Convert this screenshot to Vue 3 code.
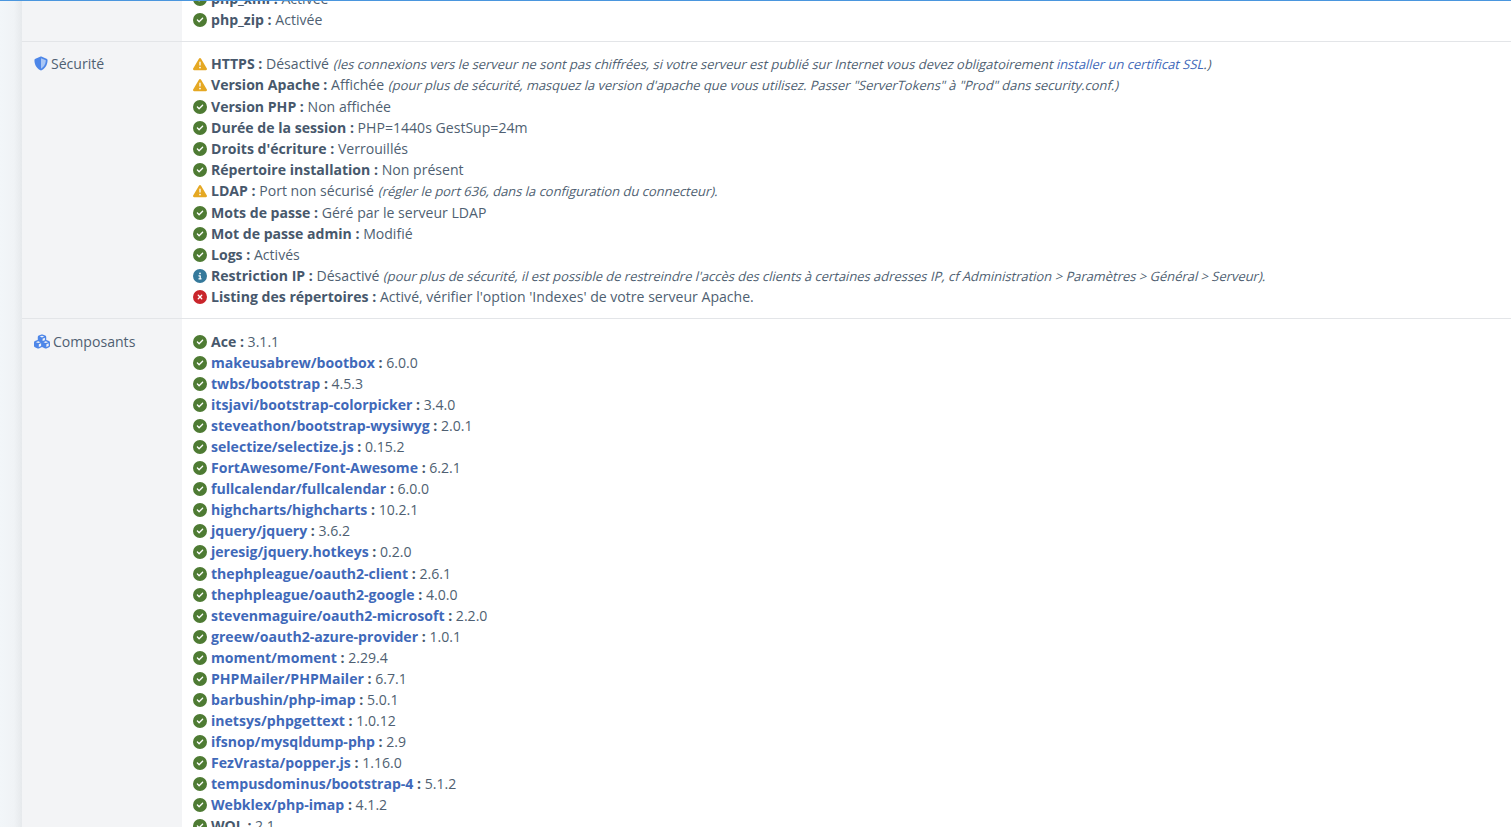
<script setup>
const icons = {
  ok: { vb: '0 0 512 512', c: '#4e7b33', d: 'M256 512A256 256 0 1 0 256 0a256 256 0 1 0 0 512zM369 209L241 337c-9.4 9.4-24.6 9.4-33.9 0l-64-64c-9.4-9.4-9.4-24.6 0-33.9s24.6-9.4 33.9 0l47 47L335 175c9.4-9.4 24.6-9.4 33.9 0s9.4 24.6 0 33.9z' },
  warn: { vb: '0 0 512 512', c: '#e5a823', d: 'M256 32c14.2 0 27.3 7.5 34.5 19.8l216 368c7.3 12.4 7.3 27.7 .2 40.1S486.3 480 472 480H40c-14.3 0-27.6-7.7-34.7-20.1s-7-27.8 .2-40.1l216-368C228.7 39.5 241.8 32 256 32zm0 128c-13.3 0-24 10.7-24 24V296c0 13.3 10.7 24 24 24s24-10.7 24-24V184c0-13.3-10.7-24-24-24zm32 224a32 32 0 1 0 -64 0 32 32 0 1 0 64 0z' },
  info: { vb: '0 0 512 512', c: '#35799b', d: 'M256 512A256 256 0 1 0 256 0a256 256 0 1 0 0 512zM216 336h24V272H216c-13.3 0-24-10.7-24-24s10.7-24 24-24h48c13.3 0 24 10.7 24 24v88h8c13.3 0 24 10.7 24 24s-10.7 24-24 24H216c-13.3 0-24-10.7-24-24s10.7-24 24-24zm40-208a32 32 0 1 1 0 64 32 32 0 1 1 0-64z' },
  err: { vb: '0 0 512 512', c: '#c9252b', d: 'M256 512A256 256 0 1 0 256 0a256 256 0 1 0 0 512zM175 175c9.4-9.4 24.6-9.4 33.9 0l47 47 47-47c9.4-9.4 24.6-9.4 33.9 0s9.4 24.6 0 33.9l-47 47 47 47c9.4 9.4 9.4 24.6 0 33.9s-24.6 9.4-33.9 0l-47-47-47 47c-9.4 9.4-24.6 9.4-33.9 0s-9.4-24.6 0-33.9l47-47-47-47c-9.4-9.4-9.4-24.6 0-33.9z' }
}

const top = [
  { i: 'ok', l: 'php_xml :', v: 'Activée' },
  { i: 'ok', l: 'php_zip :', v: 'Activée' }
]
const security = [
  { i: 'warn', l: 'HTTPS :', v: 'Désactivé', n: '(les connexions vers le serveur ne sont pas chiffrées, si votre serveur est publié sur Internet vous devez obligatoirement ', a: 'installer un certificat SSL', e: '.)' },
  { i: 'warn', l: 'Version Apache :', v: 'Affichée', n: '(pour plus de sécurité, masquez la version d\'apache que vous utilisez. Passer "ServerTokens" à "Prod" dans security.conf.)' },
  { i: 'ok', l: 'Version PHP :', v: 'Non affichée' },
  { i: 'ok', l: 'Durée de la session :', v: 'PHP=1440s GestSup=24m' },
  { i: 'ok', l: 'Droits d\'écriture :', v: 'Verrouillés' },
  { i: 'ok', l: 'Répertoire installation :', v: 'Non présent' },
  { i: 'warn', l: 'LDAP :', v: 'Port non sécurisé', n: '(régler le port 636, dans la configuration du connecteur).' },
  { i: 'ok', l: 'Mots de passe :', v: 'Géré par le serveur LDAP' },
  { i: 'ok', l: 'Mot de passe admin :', v: 'Modifié' },
  { i: 'ok', l: 'Logs :', v: 'Activés' },
  { i: 'info', l: 'Restriction IP :', v: 'Désactivé', n: '(pour plus de sécurité, il est possible de restreindre l\'accès des clients à certaines adresses IP, cf Administration > Paramètres > Général > Serveur).' },
  { i: 'err', l: 'Listing des répertoires :', v: 'Activé, vérifier l\'option \'Indexes\' de votre serveur Apache.' }
]
const comps = [
  ['Ace', '3.1.1', true], ['makeusabrew/bootbox', '6.0.0'], ['twbs/bootstrap', '4.5.3'],
  ['itsjavi/bootstrap-colorpicker', '3.4.0'], ['steveathon/bootstrap-wysiwyg', '2.0.1'],
  ['selectize/selectize.js', '0.15.2'], ['FortAwesome/Font-Awesome', '6.2.1'],
  ['fullcalendar/fullcalendar', '6.0.0'], ['highcharts/highcharts', '10.2.1'],
  ['jquery/jquery', '3.6.2'], ['jeresig/jquery.hotkeys', '0.2.0'],
  ['thephpleague/oauth2-client', '2.6.1'], ['thephpleague/oauth2-google', '4.0.0'],
  ['stevenmaguire/oauth2-microsoft', '2.2.0'], ['greew/oauth2-azure-provider', '1.0.1'],
  ['moment/moment', '2.29.4'], ['PHPMailer/PHPMailer', '6.7.1'], ['barbushin/php-imap', '5.0.1'],
  ['inetsys/phpgettext', '1.0.12'], ['ifsnop/mysqldump-php', '2.9'], ['FezVrasta/popper.js', '1.16.0'],
  ['tempusdominus/bootstrap-4', '5.1.2'], ['Webklex/php-imap', '4.1.2'], ['WOL', '2.1', true]
].map(([l, v, plain]) => ({ i: 'ok', l, v, plain }))
</script>

<template>
  <div class="page">
    <aside class="rail"></aside>
    <main class="content">
      <section class="row row-first">
        <div class="side"></div>
        <div class="body">
          <div v-for="r in top" :key="r.l" class="line">
            <svg class="ic" :viewBox="icons[r.i].vb" :fill="icons[r.i].c"><path :d="icons[r.i].d" /></svg>
            <b>{{ r.l }}</b> {{ r.v }}
          </div>
        </div>
      </section>

      <section class="row">
        <div class="side">
          <svg class="side-ic shield" viewBox="0 0 512 512">
            <path fill="#a9c6f5" d="M256 40 60 120v40c8 120 80 270 196 320z" transform="matrix(-1 0 0 1 512 0)" />
            <path fill="#4d86e8" d="M256 0c4.6 0 9.2 1 13.4 2.9L457.7 82.8c22 9.3 38.4 31 38.3 57.2c-.5 99.2-41.3 280.7-213.6 363.2c-16.7 8-36.1 8-52.8 0C57.3 420.7 16.5 239.2 16 140c-.1-26.2 16.3-47.9 38.3-57.2L242.7 2.9C246.8 1 251.4 0 256 0zm0 66.8V444.8C394 378 431.1 230.1 432 141.4L256 66.8l0 0z" />
          </svg>
          <span>Sécurité</span>
        </div>
        <div class="body">
          <div v-for="r in security" :key="r.l" class="line" :class="{ noted: r.n }">
            <svg class="ic" :viewBox="icons[r.i].vb" :fill="icons[r.i].c"><path :d="icons[r.i].d" /></svg>
            <b>{{ r.l }}</b> {{ r.v }}
            <span v-if="r.n" class="note">{{ r.n }}<a v-if="r.a" class="link">{{ r.a }}</a>{{ r.e }}</span>
          </div>
        </div>
      </section>

      <section class="row row-comps">
        <div class="side">
          <svg class="side-ic cubes" viewBox="0 0 576 512" fill="#4d86e8">
            <path d="M290.8 48.6l78.4 29.7L288 109.5 206.8 78.3l78.4-29.7c1.8-.7 3.8-.7 5.7 0zM136 92.5V204.7c-1.3 .4-2.6 .8-3.9 1.3l-96 36.4C14.4 250.6 0 271.5 0 294.7V413.9c0 22.2 13.1 42.3 33.5 51.3l96 42.2c14.4 6.3 30.7 6.3 45.1 0L288 457.5l113.5 49.9c14.4 6.3 30.7 6.3 45.1 0l96-42.2c20.3-8.9 33.5-29.1 33.5-51.3V294.7c0-23.3-14.4-44.1-36.1-52.4l-96-36.4c-1.3-.5-2.6-.9-3.9-1.3V92.5c0-23.3-14.4-44.1-36.1-52.4l-96-36.4c-12.8-4.8-26.9-4.8-39.7 0l-96 36.4C150.4 48.4 136 69.3 136 92.5zM392 210.6l-82.4 31.2V152.6L392 121v89.6zM154.8 250.9l78.4 29.7L152 311.7 70.8 280.6l78.4-29.7c1.8-.7 3.8-.7 5.7 0zm18.8 204.4V354.8L256 323.2v95.9l-82.4 36.2zM421.2 250.9c1.8-.7 3.8-.7 5.7 0l78.4 29.7L424 311.7l-81.2-31.1 78.4-29.7zM523.2 421.2l-77.6 34.1V354.8L528 323.2v90.7c0 3.2-1.9 6-4.8 7.3z" />
          </svg>
          <span>Composants</span>
        </div>
        <div class="body">
          <div v-for="r in comps" :key="r.l" class="line tight">
            <svg class="ic" :viewBox="icons[r.i].vb" :fill="icons[r.i].c"><path :d="icons[r.i].d" /></svg>
            <b v-if="r.plain">{{ r.l }} :</b>
            <b v-else><a class="link">{{ r.l }}</a> :</b>
            {{ r.v }}
          </div>
        </div>
      </section>
    </main>
  </div>
</template>

<style>
html, body { margin: 0; height: 100%; overflow: hidden; background: #fff; }
</style>

<style scoped>
.page {
  display: flex;
  height: 827px;
  overflow: hidden;
  font-family: "Open Sans", "Noto Sans", sans-serif;
  font-size: 14.08px;
  line-height: 21.12px;
  color: #4f5f72;
  box-sizing: border-box;
  border-top: 1px solid #4a96de;
}
.rail {
  width: 22px;
  flex: none;
  background: linear-gradient(to right, #f2f6f9 0, #f0f3f6 14px, #e6e9ec 22px);
}
.content { flex: 1; min-width: 0; }
.row {
  display: flex;
  border-bottom: 1px solid #e3e5e8;
}
.row-first { margin-top: -13px; }
.side {
  width: 160px;
  flex: none;
  box-sizing: border-box;
  padding: 11px 0 0 12px;
  background: #f3f4f6;
  display: flex;
  align-items: flex-start;
  gap: 3px;
}
.side-ic { flex: none; margin-top: 3px; }
.shield { width: 14px; height: 15px; }
.cubes { width: 16px; height: 15px; }
.body {
  flex: 1;
  min-width: 0;
  padding: 11px 0 11px 11px;
  white-space: nowrap;
}
.row-first .body { padding-top: 0; padding-bottom: 10.86px; }
.row-comps .body { padding-top: 11.4px; }
.row-comps .side { padding-top: 11.6px; }
.line { height: 21.12px; }
.line.noted { height: 21.34px; }
.line.tight { height: 21.09px; }
.ic {
  width: 14px;
  height: 14px;
  vertical-align: -2px;
  margin-left: 0.3px;
  margin-right: 3.7px;
}
b { font-weight: 700; color: #47586c; }
.note {
  display: inline-block;
  font-size: 12.95px;
  transform: skewX(-14deg);
  transform-origin: 0 70%;
}
.link { color: #3f69b9; }
</style>
